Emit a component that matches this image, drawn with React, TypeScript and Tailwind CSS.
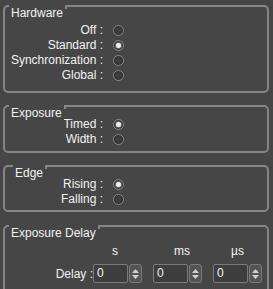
import React from "react";

const LINE = "border-[#858585]";

function Radio({ checked }: { checked?: boolean }) {
  return (
    <span className="ml-[10px] flex h-[11px] w-[11px] items-center justify-center rounded-full border border-[#8a8a8a] bg-[#3d3d3d] shadow-[inset_0_0_2px_rgba(0,0,0,0.7)]">
      {checked && <span className="h-[5px] w-[5px] rounded-full bg-[#ececec] shadow-[0_0_2px_#ffffff]" />}
    </span>
  );
}

function RadioRow({ label, checked }: { label: string; checked?: boolean }) {
  return (
    <div className="flex h-[15px] items-center">
      <span className="w-[98px] whitespace-nowrap text-right leading-[15px]">{label} :</span>
      <Radio checked={checked} />
    </div>
  );
}

function Group({
  title,
  titleLeft = "left-[4px]",
  className,
  children,
}: {
  title: string;
  titleLeft?: string;
  className: string;
  children: React.ReactNode;
}) {
  return (
    <div className={`relative shrink-0 rounded-[5px] border-2 ${LINE} ${className}`}>
      <span className={`absolute top-[-2px] ${titleLeft} bg-[#464646] px-[2px] leading-[16px] whitespace-nowrap`}>
        {title}
        {/* little hook where the frame picks up again */}
        <span className={`absolute left-full top-0 h-[4px] w-[4px] rounded-tl-[3px] border-l-2 border-t-2 ${LINE} bg-[#464646]`} />
      </span>
      {children}
    </div>
  );
}

function SpinBox() {
  return (
    <div className="flex h-[19px] w-[49px] gap-[1px]">
      <div className="w-[35px] rounded-[2px] border border-[#7a7a7a] bg-[#3e3e3e] pl-[3px] leading-[17px]">0</div>
      <div className="flex w-[13px] flex-col items-center justify-center gap-[2px] rounded-[3px] border border-[#7a7a7a] bg-[#545454]">
        <svg width="7" height="4" viewBox="0 0 7 4">
          <path d="M0 4 L3.5 0 L7 4 Z" fill="#d0d0d0" />
        </svg>
        <svg width="7" height="4" viewBox="0 0 7 4">
          <path d="M0 0 L3.5 4 L7 0 Z" fill="#d0d0d0" />
        </svg>
      </div>
    </div>
  );
}

export default function App() {
  return (
    <div className="flex h-[289px] w-[273px] flex-col gap-[12px] overflow-hidden bg-[#464646] pl-[3px] pr-[4px] pt-[5px] font-['Liberation_Sans',Arial,sans-serif] text-[12px] text-[#f2f2f2]">
      <Group title="Hardware" className="h-[88px] pt-[16px]">
        <RadioRow label="Off" />
        <RadioRow label="Standard" checked />
        <RadioRow label="Synchronization" />
        <RadioRow label="Global" />
      </Group>

      <Group title="Exposure" className="h-[48px] pt-[10px]">
        <RadioRow label="Timed" checked />
        <RadioRow label="Width" />
      </Group>

      <Group title="Edge" titleLeft="left-[8px]" className="h-[47px] pt-[10px]">
        <RadioRow label="Rising" checked />
        <RadioRow label="Falling" />
      </Group>

      <Group title="Exposure Delay" className="mt-[1px] h-[72px] pt-[17px]">
        <div className="flex h-[15px] gap-[11px] pl-[88px] leading-[15px]">
          <span className="w-[49px] pr-[5px] text-center">s</span>
          <span className="w-[49px] pl-[9px] text-center">ms</span>
          <span className="w-[49px] text-center">µs</span>
        </div>
        <div className="mt-[5px] flex items-center">
          <span className="w-[88px] whitespace-nowrap text-right">Delay :</span>
          <div className="flex gap-[11px]">
            <SpinBox />
            <SpinBox />
            <SpinBox />
          </div>
        </div>
      </Group>
    </div>
  );
}
